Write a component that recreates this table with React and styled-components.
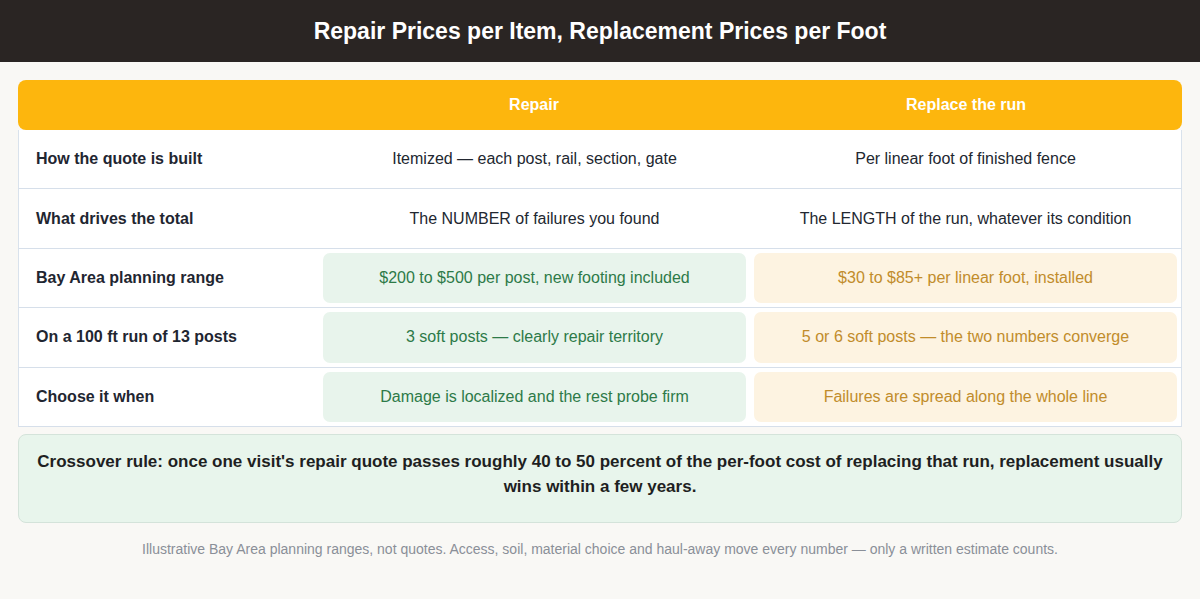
import React from "react";
import styled, { createGlobalStyle } from "styled-components";

const GlobalStyle = createGlobalStyle`
  html, body {
    margin: 0;
    padding: 0;
    background: #f9f8f5;
  }
  * {
    box-sizing: border-box;
  }
`;

const Page = styled.div`
  width: 1200px;
  min-height: 599px;
  background: #f9f8f5;
  font-family: "Liberation Sans", Arial, sans-serif;
`;

const TitleBar = styled.header`
  height: 62px;
  background: #2a2523;
  color: #ffffff;
  display: flex;
  align-items: center;
  justify-content: center;
  font-size: 23px;
  font-weight: bold;
`;

const Main = styled.main`
  padding: 18px 18px 0;
`;

const Grid = styled.div`
  display: grid;
  grid-template-columns: 300px 1fr 1fr;
`;

const HeadRow = styled(Grid)`
  height: 50px;
  background: #fdb60d;
  border-radius: 8px;
  color: #ffffff;
  font-weight: bold;
  font-size: 16px;
`;

const HeadCell = styled.div`
  display: flex;
  align-items: center;
  justify-content: center;
`;

const Row = styled(Grid)`
  height: 59.4px;
  background: #ffffff;
  border-left: 1px solid #d9e2ec;
  border-right: 1px solid #d9e2ec;
  border-bottom: 1px solid #d6dfea;
`;

const Label = styled.div`
  display: flex;
  align-items: center;
  padding-left: 17px;
  font-weight: bold;
  font-size: 16px;
  color: #1f2631;
`;

const Cell = styled.div`
  padding: 4px;
  display: flex;
`;

const tones = {
  plain: { bg: "transparent", fg: "#222730" },
  green: { bg: "#e8f4ec", fg: "#2d7a48" },
  amber: { bg: "#fdf3e1", fg: "#c18c2b" },
};

const Pill = styled.div`
  flex: 1;
  display: flex;
  align-items: center;
  justify-content: center;
  border-radius: 7px;
  font-size: 16px;
  background: ${(p) => tones[p.$tone].bg};
  color: ${(p) => tones[p.$tone].fg};
`;

const Callout = styled.div`
  margin-top: 7px;
  height: 89px;
  padding: 14px 14px 0;
  background: #e8f5ec;
  border: 1px solid #d4e3da;
  border-radius: 8px;
  text-align: center;
  font-weight: bold;
  font-size: 17px;
  line-height: 25px;
  color: #1e1f22;
`;

const Footnote = styled.p`
  margin: 0;
  padding-top: 18px;
  text-align: center;
  font-size: 14px;
  color: #8a8f98;
`;

const rows = [
  {
    label: "How the quote is built",
    repair: "Itemized — each post, rail, section, gate",
    replace: "Per linear foot of finished fence",
    tinted: false,
  },
  {
    label: "What drives the total",
    repair: "The NUMBER of failures you found",
    replace: "The LENGTH of the run, whatever its condition",
    tinted: false,
  },
  {
    label: "Bay Area planning range",
    repair: "$200 to $500 per post, new footing included",
    replace: "$30 to $85+ per linear foot, installed",
    tinted: true,
  },
  {
    label: "On a 100 ft run of 13 posts",
    repair: "3 soft posts — clearly repair territory",
    replace: "5 or 6 soft posts — the two numbers converge",
    tinted: true,
  },
  {
    label: "Choose it when",
    repair: "Damage is localized and the rest probe firm",
    replace: "Failures are spread along the whole line",
    tinted: true,
  },
];

export default function App() {
  return (
    <Page>
      <GlobalStyle />
      <TitleBar>Repair Prices per Item, Replacement Prices per Foot</TitleBar>
      <Main>
        <HeadRow>
          <HeadCell />
          <HeadCell>Repair</HeadCell>
          <HeadCell>Replace the run</HeadCell>
        </HeadRow>
        {rows.map((r) => (
          <Row key={r.label}>
            <Label>{r.label}</Label>
            <Cell>
              <Pill $tone={r.tinted ? "green" : "plain"}>{r.repair}</Pill>
            </Cell>
            <Cell>
              <Pill $tone={r.tinted ? "amber" : "plain"}>{r.replace}</Pill>
            </Cell>
          </Row>
        ))}
        <Callout>
          Crossover rule: once one visit's repair quote passes roughly 40 to 50 percent of the
          per-foot cost of replacing that run, replacement usually wins within a few years.
        </Callout>
        <Footnote>
          Illustrative Bay Area planning ranges, not quotes. Access, soil, material choice and
          haul-away move every number — only a written estimate counts.
        </Footnote>
      </Main>
    </Page>
  );
}
